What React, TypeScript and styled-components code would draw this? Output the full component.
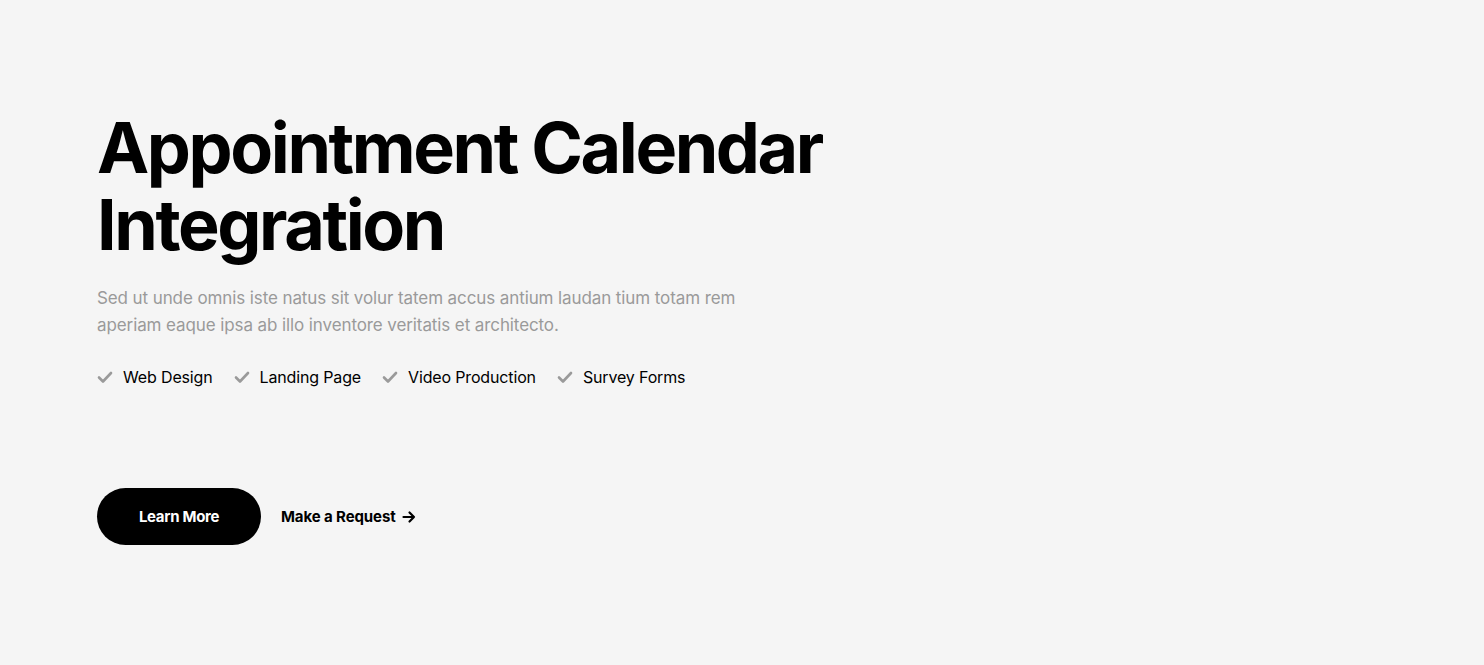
import React from "react";
import styled, { createGlobalStyle } from "styled-components";

const Global = createGlobalStyle`
  body {
    margin: 0;
    background: #f5f5f5;
    font-family: "Inter", "Noto Sans", sans-serif;
  }
`;

const Hero = styled.section`
  padding: 109px 97px 0;
  min-height: 665px;
  box-sizing: border-box;
`;

const Title = styled.h1`
  margin: 0;
  font-size: 70px;
  line-height: 77px;
  font-weight: 700;
  letter-spacing: -2.4px;
  color: #000;
`;

const Lead = styled.p`
  margin: 22px 0 0;
  max-width: 680px;
  font-size: 17px;
  line-height: 27px;
  letter-spacing: -0.1px;
  color: #9a9a9a;
`;

const Features = styled.ul`
  list-style: none;
  margin: 28px 0 0;
  padding: 0;
  display: flex;
  gap: 21px;
`;

const Feature = styled.li`
  display: flex;
  align-items: center;
  gap: 10px;
  font-size: 16px;
  letter-spacing: -0.15px;
  color: #000;
`;

const Actions = styled.div`
  display: flex;
  align-items: center;
  gap: 20px;
  margin-top: 101px;
`;

const Primary = styled.a`
  display: inline-flex;
  align-items: center;
  justify-content: center;
  width: 164px;
  height: 57px;
  border-radius: 29px;
  background: #000;
  color: #fff;
  font-size: 15px;
  font-weight: 700;
  letter-spacing: -0.3px;
  text-decoration: none;
`;

const TextLink = styled.a`
  display: inline-flex;
  align-items: center;
  gap: 6px;
  color: #000;
  font-size: 15px;
  font-weight: 700;
  letter-spacing: -0.1px;
  text-decoration: none;
`;

const Check = () => (
  <svg width="16" height="14" viewBox="0 0 16 14" fill="none">
    <path d="M2 7.5l4 4L14 3" stroke="#9a9a9a" strokeWidth="2.6" strokeLinecap="round" strokeLinejoin="round" />
  </svg>
);

const Arrow = () => (
  <svg width="14" height="14" viewBox="0 0 14 14" fill="none">
    <path d="M1.5 7h10.5M7.5 2.5L12 7l-4.5 4.5" stroke="#000" strokeWidth="2.2" strokeLinecap="round" strokeLinejoin="round" />
  </svg>
);

const items = ["Web Design", "Landing Page", "Video Production", "Survey Forms"];

export default function App() {
  return (
    <>
      <Global />
      <Hero>
        <Title>
          Appointment Calendar
          <br />
          Integration
        </Title>
        <Lead>
          Sed ut unde omnis iste natus sit volur tatem accus antium laudan tium totam rem
          <br />
          aperiam eaque ipsa ab illo inventore veritatis et architecto.
        </Lead>
        <Features>
          {items.map((t) => (
            <Feature key={t}>
              <Check />
              {t}
            </Feature>
          ))}
        </Features>
        <Actions>
          <Primary href="#">Learn More</Primary>
          <TextLink href="#">
            Make a Request <Arrow />
          </TextLink>
        </Actions>
      </Hero>
    </>
  );
}
